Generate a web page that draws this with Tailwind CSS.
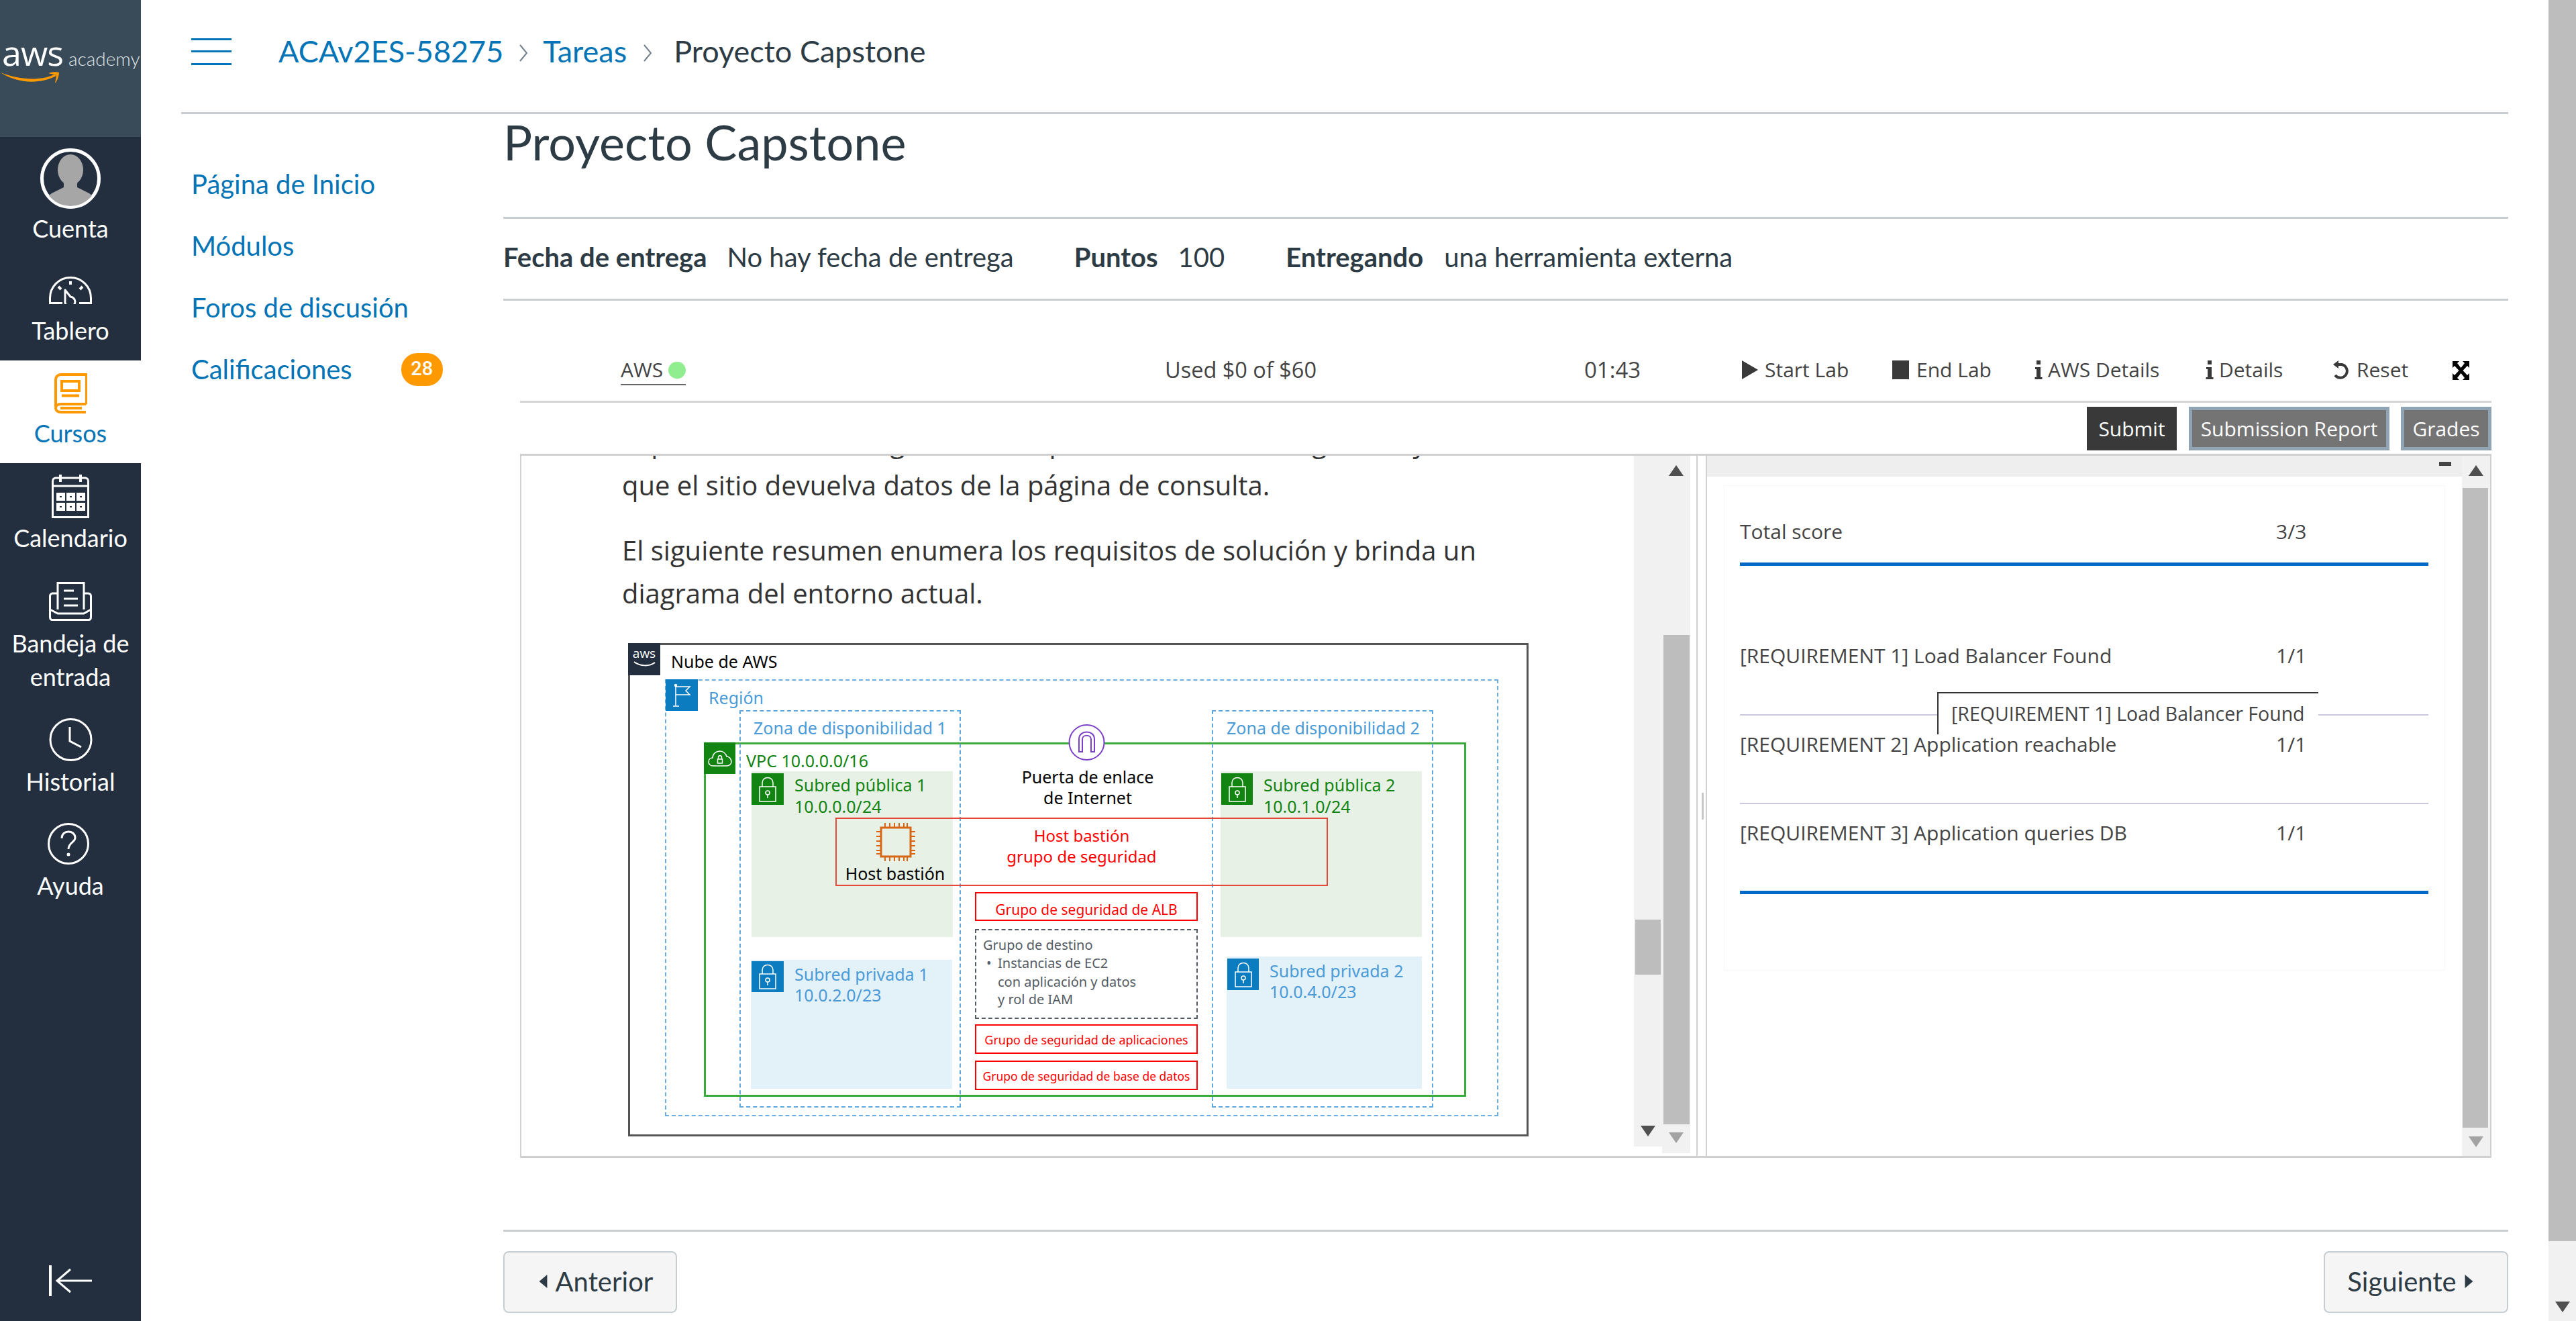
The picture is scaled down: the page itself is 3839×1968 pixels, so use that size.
<!DOCTYPE html>
<html lang="es">
<head>
<meta charset="utf-8">
<title>Proyecto Capstone</title>
<script src="https://cdn.jsdelivr.net/npm/@tailwindcss/browser@4"></script>
</head>
<body class="bg-white">
<div class="flex w-[3839px] h-[1968px] overflow-hidden font-[Lato] text-[#2d3b45]">

  <!-- Global nav -->
  <aside class="w-[210px] shrink-0 h-full flex flex-col bg-[#232f3f] text-white text-[36px] leading-[50px] text-center">
    <div class="h-[204px] bg-[#394b58] relative overflow-hidden">
      <span class="absolute left-[3px] top-[55px] font-['Open_Sans'] text-[52px] leading-[46px] tracking-[-1px]">aws</span>
      <span class="absolute left-[102px] top-[73px] text-[28px] leading-[28px] font-light text-[#dfe3e6]">academy</span>
      <svg class="absolute left-0 top-[103px]" width="92" height="26" viewBox="0 0 92 26"><path d="M1 5 C22 20 58 24 84 10 L81 8 C60 18 28 16 1 5Z" fill="#f90"/><path d="M72 6 C78 4 85 4 88 5 C88 10 85 18 82 21 C83 15 84 11 84 9 C81 8 76 7 72 6Z" fill="#f90"/></svg>
    </div>
    <a class="h-[178px] pt-[17px] flex flex-col items-center">
      <svg width="90" height="90" viewBox="0 0 90 90"><defs><clipPath id="av"><circle cx="45" cy="45" r="41"/></clipPath></defs><circle cx="45" cy="45" r="42.5" fill="#232f3f" stroke="#fff" stroke-width="5"/><g clip-path="url(#av)" fill="#a6a6a6"><ellipse cx="45" cy="32" rx="19" ry="23"/><path d="M35 48h20v10l18 9c5 3 8 9 8 23H9c0-14 3-20 8-23l18-9z"/></g></svg>
      <span class="mt-[4px]">Cuenta</span>
    </a>
    <a class="h-[155px] pt-[30px] flex flex-col items-center">
      <svg width="64" height="41" viewBox="0 0 64 41" fill="none" stroke="#fff" stroke-width="3"><path d="M20 39.500H1.500V32A30.500 30.500 0 0 1 62.500 32V39.500H45"/><path d="M24 20L32 30A7.500 7.500 0 1 1 24 36Z" stroke-linejoin="round"/><path d="M32 7v5M14 15l4 4M50 15l-4 4" stroke-width="4"/></svg>
      <span class="mt-[14px]">Tablero</span>
    </a>
    <a class="h-[153px] pt-[19px] flex flex-col items-center bg-white text-[#0374b5]">
      <svg width="49" height="60" viewBox="0 0 49 60" fill="none" stroke="#f90" stroke-width="4"><path d="M48 46.500V2H10C5 2 2 5 2 10V50"/><path d="M47 46H10C5 46 2 48.500 2 52S5 58 10 58H47"/><path d="M9 52H41"/><path d="M11 12H37V26H11ZM11 33.500H37"/></svg>
      <span class="mt-[4px]">Cursos</span>
    </a>
    <a class="h-[150px] pt-[17px] flex flex-col items-center">
      <svg width="56" height="65" viewBox="0 0 56 65" fill="none" stroke="#fff" stroke-width="3"><path d="M1.500 63.500V10C1.500 7 3.500 5 6 5H50C52.500 5 54.500 7 54.500 10V63.500ZM1.500 17H54.500"/><path d="M13 0v11M43 0v11" stroke-width="4"/><g stroke-width="5"><path d="M9.500 29.500h8v7h-8zM24.500 29.500h8v7h-8zM39.500 29.500h8v7h-8zM9.500 44.500h8v7h-8zM24.500 44.500h8v7h-8zM39.500 44.500h8v7h-8z"/></g></svg>
      <span class="mt-[4px]">Calendario</span>
    </a>
    <a class="h-[210px] pt-[27px] flex flex-col items-center">
      <svg width="64" height="58" viewBox="0 0 64 58" fill="none" stroke="#fff" stroke-width="3"><path d="M13 41V1.500H52V41"/><path d="M22 13H37M22 25H43M22 35H43"/><path d="M13 17H5C3 17 1.500 19 1.500 21V52C1.500 55 3 56.500 5 56.500H59C61 56.500 62.500 55 62.500 52V21C62.500 19 61 17 59 17H52"/><path d="M1.500 41L13 47H52L62.500 41"/></svg>
      <span class="mt-[8px]">Bandeja de<br>entrada</span>
    </a>
    <a class="h-[150px] pt-[20px] flex flex-col items-center">
      <svg width="65" height="64" viewBox="0 0 65 64" fill="none" stroke="#fff" stroke-width="3"><circle cx="32.500" cy="32" r="30.500"/><path d="M31 13V34L48 43"/></svg>
      <span class="mt-[5px]">Historial</span>
    </a>
    <a class="pt-[26px] flex flex-col items-center">
      <svg width="62" height="62" viewBox="0 0 62 62" fill="none" stroke="#fff" stroke-width="3" class="-ml-[6px]"><circle cx="31" cy="31" r="29.500"/><path d="M21 23C21 16 26 13 31 13C37 13 41 17 41 22C41 29 31 29 31 39"/><circle cx="31" cy="47" r="2.500" fill="#fff" stroke="none"/></svg>
      <span class="mt-[6px]">Ayuda</span>
    </a>
    <div class="mt-auto mb-[37px] flex justify-center">
      <svg width="64" height="46" viewBox="0 0 64 46" fill="none" stroke="#fff" stroke-width="3"><path d="M2 0V46" stroke-width="4"/><path d="M64 23H12M32 6L12 23L32 40"/></svg>
    </div>
  </aside>

  <!-- Main -->
  <div class="flex-1 min-w-0">
    <header class="ml-[60px] w-[3468px] h-[170px] border-b-[3px] border-[#c7cdd1] flex items-center pb-[14px] text-[45px]">
      <svg class="ml-[15px]" width="60" height="40" viewBox="0 0 60 40" fill="#0374b5"><rect width="60" height="3"/><rect y="18" width="60" height="3"/><rect y="37" width="60" height="3"/></svg>
      <a class="ml-[70px] text-[#0374b5]">ACAv2ES-58275</a>
      <svg class="ml-[23px] mt-[4px]" width="14" height="30" viewBox="0 0 14 30" fill="none" stroke="#73818c" stroke-width="2"><path d="M2 3L12 15L2 27"/></svg>
      <a class="ml-[22px] text-[#0374b5]">Tareas</a>
      <svg class="ml-[24px] mt-[4px]" width="14" height="30" viewBox="0 0 14 30" fill="none" stroke="#73818c" stroke-width="2"><path d="M2 3L12 15L2 27"/></svg>
      <span class="ml-[32px]">Proyecto Capstone</span>
    </header>

    <div class="flex">
      <!-- Course nav -->
      <nav class="ml-[75px] w-[465px] shrink-0 pt-[58px] text-[40px] text-[#0374b5]">
        <a class="h-[92px] flex items-center">Página de Inicio</a>
        <a class="h-[92px] flex items-center">Módulos</a>
        <a class="h-[92px] flex items-center">Foros de discusión</a>
        <a class="h-[92px] flex items-center">Calificaciones<span class="ml-[73px] w-[62px] h-[49px] rounded-[24px] bg-[#f90] text-white font-[Roboto] font-medium text-[29px] flex items-center justify-center">28</span></a>
      </nav>

      <!-- Content -->
      <main class="w-[2988px] shrink-0">
        <h1 class="h-[156px] border-b-[3px] border-[#c7cdd1] text-[72px] leading-[83px] font-normal">Proyecto Capstone</h1>
        <div class="h-[122px] border-b-[3px] border-[#c7cdd1] flex items-center pb-[6px] text-[40px]">
          <b class="font-bold">Fecha de entrega</b><span class="ml-[30px]">No hay fecha de entrega</span>
          <b class="ml-[90px] font-bold">Puntos</b><span class="ml-[30px]">100</span>
          <b class="ml-[91px] font-bold">Entregando</b><span class="ml-[31px]">una herramienta externa</span>
        </div>

        <div class="mx-[25px] font-['Open_Sans'] text-[#444]">
          <!-- lab toolbar -->
          <div class="h-[152px] border-b-[3px] border-[#d4d4d4] pl-[150px] pt-[78px] flex items-start text-[30px] leading-[50px]">
            <div class="w-[811px]"><span class="inline-flex items-center border-b-2 border-[#666] h-[44px] leading-[44px]">AWS<i class="ml-[8px] w-[26px] h-[25px] rounded-full bg-[#90ee90]"></i></span></div>
            <div class="w-[625px] text-[32.500px]">Used $0 of $60</div>
            <div class="w-[235px] text-[33px]">01:43</div>
            <div class="w-[224px] flex items-center gap-[10px]"><svg width="24" height="28" viewBox="0 0 24 28" fill="#393939"><path d="M0 0L24 14L0 28Z"/></svg>Start Lab</div>
            <div class="w-[212px] flex items-center gap-[11px]"><svg width="25" height="28" fill="#393939"><rect width="25" height="28"/></svg>End Lab</div>
            <div class="w-[255px] flex items-center gap-[8px]"><svg width="12" height="28" viewBox="0 0 12 28" fill="#393939"><rect x="3" y="0" width="6" height="6"/><path d="M1 10H9V25H11.500V28H.5V25H3V13H1Z"/></svg>AWS Details</div>
            <div class="w-[189px] flex items-center gap-[8px]"><svg width="12" height="28" viewBox="0 0 12 28" fill="#393939"><rect x="3" y="0" width="6" height="6"/><path d="M1 10H9V25H11.500V28H.5V25H3V13H1Z"/></svg>Details</div>
            <div class="w-[179px] flex items-center gap-[10px]"><svg width="26" height="28" viewBox="0 0 26 28" fill="none" stroke="#393939" stroke-width="4"><path d="M7 6H14A10 10 0 1 1 4 22"/><path d="M1 6L9 0V12Z" fill="#393939" stroke="none"/></svg>Reset</div>
            <div class="w-[25px] pt-[12px]"><svg width="25" height="28" viewBox="0 0 25 28" fill="#000"><path d="M0 0H10L7 3L12.500 10L18 3L15 0H25V10L22 7L15.500 14L22 21L25 18V28H15L18 25L12.500 18L7 25L10 28H0V18L3 21L9.500 14L3 7L0 10Z"/></svg></div>
          </div>
          <!-- actions -->
          <div class="h-[76px] pt-[6px] flex justify-end text-[30px] text-white">
            <a class="w-[134px] h-[65px] bg-[#393939] flex items-center justify-center">Submit</a>
            <a class="ml-[18px] w-[299px] h-[65px] bg-[#747474] border-[5px] border-[#90a4b4] flex items-center justify-center">Submission Report</a>
            <a class="ml-[17px] w-[135px] h-[65px] bg-[#747474] border-[5px] border-[#90a4b4] flex items-center justify-center">Grades</a>
          </div>

          <!-- frame -->
          <div class="h-[1049px] border-[3px] border-[#d0d0d0] border-r-2 border-l-2 flex items-stretch overflow-hidden">
            <!-- left pane -->
            <div class="w-[1658px] shrink-0 overflow-hidden">
              <div class="pl-[150px] -mt-[52px] text-[40px] leading-[64px] text-[#333]">
                <p class="whitespace-nowrap">Experimentación, asegúrese de la prueba del balanceo general y<br>que el sitio devuelva datos de la página de consulta.</p>
                <p class="mt-[33px] whitespace-nowrap">El siguiente resumen enumera los requisitos de solución y brinda un<br>diagrama del entorno actual.</p>
              </div>
              <!-- diagram -->
              <div class="relative ml-[159px] mt-[42px] w-[1342px] h-[735px] font-['Noto_Sans'] text-[#000] text-[25px] leading-none [&>span]:absolute [&>span]:whitespace-nowrap [&>span]:-translate-y-1/2">
                <div class="absolute inset-0 border-[3px] border-[#555]"></div>
                <div class="absolute left-[184px] top-[191px] w-[300px] h-[247px] bg-[#e7f1e5]"></div>
                <div class="absolute left-[883px] top-[191px] w-[300px] h-[247px] bg-[#e7f1e5]"></div>
                <div class="absolute left-[183px] top-[472px] w-[300px] h-[192px] bg-[#e3f1f9]"></div>
                <div class="absolute left-[892px] top-[467px] w-[291px] h-[197px] bg-[#e3f1f9]"></div>
                <div class="absolute left-[55px] top-[54px] w-[1242px] h-[651px] border-2 border-dashed border-[#6caee3]"></div>
                <div class="absolute left-[113px] top-[148px] w-[1136px] h-[528px] border-[3px] border-[#3aab3a]"></div>
                <div class="absolute left-[166px] top-[100px] w-[330px] h-[592px] border-2 border-dashed border-[#5fa8e0]"></div>
                <div class="absolute left-[870px] top-[100px] w-[330px] h-[592px] border-2 border-dashed border-[#5fa8e0]"></div>
                <div class="absolute left-[309px] top-[260px] w-[734px] h-[102px] border-[2px] border-[#e8483a]"></div>

                <!-- aws logo -->
                <div class="absolute left-0 top-0 w-[48px] h-[48px] bg-[#232f3e] text-white text-[19px] text-center leading-[30px] font-['Open_Sans'] overflow-hidden">aws<svg class="absolute left-[8px] top-[27px]" width="33" height="10" viewBox="0 0 33 10"><path d="M1 1C10 8 24 8 32 2" fill="none" stroke="#fff" stroke-width="2"/></svg></div>
                <span class="left-[64px] top-[27px]">Nube de AWS</span>
                <!-- region -->
                <div class="absolute left-[56px] top-[54px] w-[48px] h-[47px] bg-[#0a7cbf] flex items-center justify-center"><svg width="28" height="36" viewBox="0 0 28 36" fill="none" stroke="#fff" stroke-width="1.500"><path d="M5 3V34M1 34H10M5 5H26L20 11L26 17H5"/><circle cx="5" cy="3" r="1.500" fill="#fff"/></svg></div>
                <span class="left-[120px] top-[81px] text-[#4a9bd8]">Región</span>
                <span class="left-[187px] top-[126px] text-[#4a9bd8]">Zona de disponibilidad 1</span>
                <span class="left-[892px] top-[126px] text-[#4a9bd8]">Zona de disponibilidad 2</span>
                <!-- vpc -->
                <div class="absolute left-[113px] top-[148px] w-[47px] h-[47px] bg-[#128412] flex items-center justify-center"><svg width="36" height="26" viewBox="0 0 36 26" fill="none" stroke="#fff" stroke-width="1.500"><path d="M8 24C3 24 1 21 1 18C1 14 4 12 7 12C7 6 12 2 18 2C23 2 27 6 28 10C32 10 35 14 35 18C35 21 32 24 28 24Z"/><rect x="14.500" y="14" width="7" height="6"/><path d="M15.500 14V11C15.500 8 20.500 8 20.500 11V14"/></svg></div>
                <span class="left-[176px] top-[175px] text-[#128412]">VPC 10.0.0.0/16</span>

                <!-- subnet icons -->
                <div class="absolute left-[184px] top-[194px] w-[48px] h-[47px] bg-[#128412] flex items-center justify-center"><svg width="26" height="38" viewBox="0 0 26 38" fill="none" stroke="#fff" stroke-width="1.500"><rect x="1" y="15" width="24" height="22"/><path d="M5 15V9C5 -1 21 -1 21 9V15"/><circle cx="13" cy="24" r="3"/><path d="M13 27V32"/></svg></div>
                <span class="left-[248px] top-[211px] text-[#128412]">Subred pública 1</span>
                <span class="left-[248px] top-[243px] text-[#128412]">10.0.0.0/24</span>
                <div class="absolute left-[884px] top-[194px] w-[47px] h-[47px] bg-[#128412] flex items-center justify-center"><svg width="26" height="38" viewBox="0 0 26 38" fill="none" stroke="#fff" stroke-width="1.500"><rect x="1" y="15" width="24" height="22"/><path d="M5 15V9C5 -1 21 -1 21 9V15"/><circle cx="13" cy="24" r="3"/><path d="M13 27V32"/></svg></div>
                <span class="left-[947px] top-[211px] text-[#128412]">Subred pública 2</span>
                <span class="left-[947px] top-[243px] text-[#128412]">10.0.1.0/24</span>
                <div class="absolute left-[184px] top-[474px] w-[48px] h-[46px] bg-[#0a7cbf] flex items-center justify-center"><svg width="26" height="38" viewBox="0 0 26 38" fill="none" stroke="#fff" stroke-width="1.500"><rect x="1" y="15" width="24" height="22"/><path d="M5 15V9C5 -1 21 -1 21 9V15"/><circle cx="13" cy="24" r="3"/><path d="M13 27V32"/></svg></div>
                <span class="left-[248px] top-[493px] text-[#4a9bd8]">Subred privada 1</span>
                <span class="left-[248px] top-[524px] text-[#4a9bd8]">10.0.2.0/23</span>
                <div class="absolute left-[893px] top-[470px] w-[47px] h-[47px] bg-[#0a7cbf] flex items-center justify-center"><svg width="26" height="38" viewBox="0 0 26 38" fill="none" stroke="#fff" stroke-width="1.500"><rect x="1" y="15" width="24" height="22"/><path d="M5 15V9C5 -1 21 -1 21 9V15"/><circle cx="13" cy="24" r="3"/><path d="M13 27V32"/></svg></div>
                <span class="left-[956px] top-[488px] text-[#4a9bd8]">Subred privada 2</span>
                <span class="left-[956px] top-[519px] text-[#4a9bd8]">10.0.4.0/23</span>

                <!-- ec2 -->
                <svg class="absolute left-[370px] top-[268px]" width="58" height="57" viewBox="0 0 58 57" fill="none" stroke="#d86613" stroke-width="3"><rect x="7" y="7" width="44" height="43"/><g stroke-width="2"><path d="M13 0V7M20 0V7M27 0V7M34 0V7M41 0V7M46 0V7M13 50V57M20 50V57M27 50V57M34 50V57M41 50V57M46 50V57M0 13H7M0 20H7M0 27H7M0 34H7M0 41H7M0 46H7M51 13H58M51 20H58M51 27H58M51 34H58M51 41H58M51 46H58"/></g></svg>
                <span class="left-[398px] top-[343px] -translate-x-1/2">Host bastión</span>
                <span class="left-[676px] top-[287px] -translate-x-1/2 text-[24px] text-[#f00]">Host bastión</span>
                <span class="left-[676px] top-[318px] -translate-x-1/2 text-[24px] text-[#f00]">grupo de seguridad</span>

                <!-- gateway -->
                <svg class="absolute left-[656px] top-[121px]" width="55" height="54" viewBox="0 0 55 54" fill="none" stroke="#7b3fc8" stroke-width="2"><circle cx="27.500" cy="27" r="26" fill="#fff"/><path d="M16 41V22C16 8 39 8 39 22V41H34V22C34 15 21 15 21 22V41Z"/></svg>
                <span class="left-[685px] top-[199px] -translate-x-1/2">Puerta de enlace</span>
                <span class="left-[685px] top-[230px] -translate-x-1/2">de Internet</span>

                <!-- sg boxes -->
                <div class="absolute left-[517px] top-[371px] w-[332px] h-[43px] border-2 border-[#f00] bg-white"></div>
                <span class="left-[683px] top-[397px] -translate-x-1/2 text-[#f00] text-[21px]">Grupo de seguridad de ALB</span>
                <div class="absolute left-[517px] top-[426px] w-[332px] h-[134px] border-2 border-dashed border-[#545b64]"></div>
                <span class="left-[529px] top-[450px] text-[#545b64] text-[20px]">Grupo de destino</span>
                <span class="left-[534px] top-[477px] text-[#545b64] text-[20px]">•</span>
                <span class="left-[551px] top-[477px] text-[#545b64] text-[20px]">Instancias de EC2</span>
                <span class="left-[551px] top-[505px] text-[#545b64] text-[20px]">con aplicación y datos</span>
                <span class="left-[551px] top-[531px] text-[#545b64] text-[20px]">y rol de IAM</span>
                <div class="absolute left-[517px] top-[568px] w-[332px] h-[44px] border-2 border-[#f00] bg-white"></div>
                <span class="left-[683px] top-[591px] -translate-x-1/2 text-[#f00] text-[18px]">Grupo de seguridad de aplicaciones</span>
                <div class="absolute left-[517px] top-[622px] w-[332px] h-[44px] border-2 border-[#f00] bg-white"></div>
                <span class="left-[683px] top-[646px] -translate-x-1/2 text-[#f00] text-[17.500px]">Grupo de seguridad de base de datos</span>
              </div>
            </div>
            <!-- inner scrollbar -->
            <div class="w-[42px] h-[1029px] shrink-0 bg-[#f1f1f1] flex flex-col items-center">
              <div class="mt-[691px] w-[38px] h-[82px] bg-[#bdbdbd]"></div>
              <svg class="mt-[225px]" width="22" height="16" viewBox="0 0 22 16" fill="#505050"><path d="M0 0H22L11 16Z"/></svg>
            </div>
            <!-- outer scrollbar -->
            <div class="w-[42px] h-[1039px] shrink-0 bg-[#f1f1f1] flex flex-col items-center">
              <svg class="mt-[14px]" width="22" height="16" viewBox="0 0 22 16" fill="#505050"><path d="M0 16H22L11 0Z"/></svg>
              <div class="mt-[237px] w-[39px] h-[729px] bg-[#bdbdbd]"></div>
              <svg class="mt-[12px]" width="22" height="16" viewBox="0 0 22 16" fill="#a3a3a3"><path d="M0 0H22L11 16Z"/></svg>
            </div>
            <!-- divider -->
            <div class="ml-[9px] w-[16px] shrink-0 border-x-2 border-[#d0d0d0] relative"><div class="absolute left-[6px] top-[502px] w-[3px] h-[40px] bg-[#c8c8c8]"></div></div>

            <!-- right pane -->
            <div class="flex-1 min-w-0 flex flex-col">
              <div class="h-[31px] bg-[#eee] relative"><div class="absolute right-[16px] top-[9px] w-[18px] h-[6px] bg-[#444]"></div></div>
              <div class="mx-[25px] mt-[13px] h-[723px] border border-[#f7f7f7] pl-[23px] pr-[24px] text-[30px] text-[#444]">
                <div class="relative">
                  <div class="pt-[50px] h-[90px] flex leading-[36px] font-medium"><span class="w-[799px]">Total score</span><span>3/3</span></div>
                  <div class="mt-[24px] h-[5px] bg-[#0069c8]"></div>
                  <div class="mt-[116px] h-[40px] flex leading-[36px]"><span class="w-[799px]">[REQUIREMENT 1] Load Balancer Found</span><span>1/1</span></div>
                  <div class="mt-[65px] h-[2px] bg-[#cbc8e0]"></div>
                  <div class="mt-[25px] h-[40px] flex leading-[36px]"><span class="w-[799px]">[REQUIREMENT 2] Application reachable</span><span>1/1</span></div>
                  <div class="mt-[65px] h-[2px] bg-[#cbc8e0]"></div>
                  <div class="mt-[25px] h-[40px] flex leading-[36px]"><span class="w-[799px]">[REQUIREMENT 3] Application queries DB</span><span>1/1</span></div>
                  <div class="mt-[64px] h-[5px] bg-[#0069c8]"></div>
                  <div class="absolute left-[294px] top-[307px] w-[568px] h-[63px] bg-white border-t-2 border-l-2 border-[#333] pl-[19px] text-[28.500px] flex items-center whitespace-nowrap">[REQUIREMENT 1] Load Balancer Found</div>
                </div>
              </div>
            </div>
            <!-- right scrollbar -->
            <div class="w-[42px] shrink-0 bg-[#f1f1f1] flex flex-col items-center">
              <svg class="mt-[14px]" width="22" height="16" viewBox="0 0 22 16" fill="#505050"><path d="M0 16H22L11 0Z"/></svg>
              <div class="mt-[18px] w-[38px] h-[953px] bg-[#bdbdbd] -ml-[2px]"></div>
              <svg class="mt-[13px]" width="22" height="16" viewBox="0 0 22 16" fill="#a3a3a3"><path d="M0 0H22L11 16Z"/></svg>
            </div>
          </div>
        </div>

        <!-- footer -->
        <div class="mt-[107px] border-t-[3px] border-[#c7cdd1] pt-[29px] flex justify-between text-[40px]">
          <a class="w-[259px] h-[92px] bg-[#f5f5f5] border-2 border-[#c7cdd1] rounded-[8px] flex items-center justify-center gap-[12px] pl-[17px] pb-[3px]"><svg width="13" height="20" viewBox="0 0 13 22" fill="#2d3b45"><path d="M13 0V22L0 11Z"/></svg>Anterior</a>
          <a class="w-[275px] h-[92px] bg-[#f5f5f5] border-2 border-[#c7cdd1] rounded-[8px] flex items-center justify-center gap-[12px] pr-[17px] pb-[3px]">Siguiente<svg width="13" height="20" viewBox="0 0 13 22" fill="#2d3b45"><path d="M0 0V22L13 11Z"/></svg></a>
        </div>
      </main>
    </div>
  </div>

  <!-- page scrollbar -->
  <div class="w-[41px] shrink-0 h-full bg-[#f1f1f1] flex flex-col items-center">
    <div class="w-[41px] h-[1849px] bg-[#bdbdbd]"></div>
    <svg class="mt-[90px]" width="22" height="16" viewBox="0 0 22 16" fill="#505050"><path d="M0 0H22L11 16Z"/></svg>
  </div>
</div>
</body>
</html>
